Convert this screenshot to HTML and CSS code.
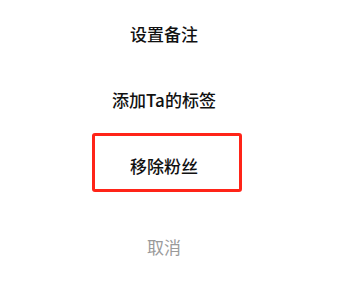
FILE: index.html
```html
<!DOCTYPE html>
<html lang="zh">
<head>
<meta charset="utf-8">
<link rel="stylesheet" href="styles.css">
</head>
<body>
<div class="sheet">
  <div class="item">设置备注</div>
  <div class="item">添加Ta的标签</div>
  <div class="item">移除粉丝</div>
  <div class="item cancel">取消</div>
  <div class="mark"></div>
</div>
</body>
</html>
```
FILE: styles.css
```css
html, body {
  margin: 0;
  padding: 0;
  background: #ffffff;
}
.sheet {
  position: relative;
  width: 328px;
  height: 289px;
  padding-top: 1px;
  box-sizing: border-box;
  display: flex;
  flex-direction: column;
  font-family: "Noto Sans CJK SC", "Noto Sans", sans-serif;
}
.item {
  height: 66px;
  line-height: 66px;
  text-align: center;
  font-size: 17px;
  font-weight: 500;
  color: #111111;
}
.cancel {
  margin-top: 15px;
  color: #9a9a9a;
  font-weight: 400;
}
.mark {
  position: absolute;
  left: 92px;
  top: 133px;
  width: 150px;
  height: 59px;
  box-sizing: border-box;
  border: 3px solid #ff2418;
  border-radius: 3px;
}
```
